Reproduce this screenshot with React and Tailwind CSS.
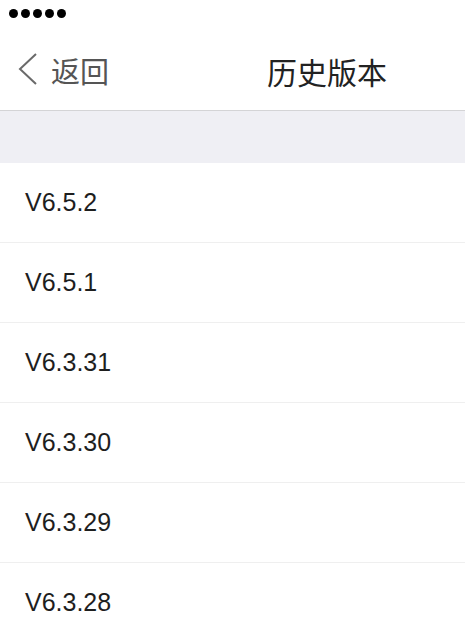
import React from 'react';

const versions = ['V6.5.2', 'V6.5.1', 'V6.3.31', 'V6.3.30', 'V6.3.29', 'V6.3.28'];

function StatusBar() {
  return (
    <div className="h-[28px] pl-[9px] pt-[9px] flex gap-[3px]">
      {[0, 1, 2, 3, 4].map((i) => (
        <span key={i} className="block w-[9px] h-[9px] rounded-full bg-black" />
      ))}
    </div>
  );
}

function NavBar() {
  return (
    <div className="h-[83px] flex items-center border-b border-[#d4d4d6] bg-white">
      <div className="flex items-center pl-[18px]">
        <svg width="20" height="32" viewBox="0 0 20 32" fill="none">
          <polyline points="18,1 2,16 18,31" stroke="#6a6a6a" strokeWidth="2" />
        </svg>
        <span className="ml-[13px] mt-[2px] text-[29px] leading-none text-[#555555] font-['Noto_Sans_CJK_SC',sans-serif]">
          返回
        </span>
      </div>
      <span className="ml-[158px] mt-[3px] text-[30px] leading-none text-[#222222] font-['Noto_Sans_CJK_SC',sans-serif]">
        历史版本
      </span>
    </div>
  );
}

export default function App() {
  return (
    <div className="w-[465px] h-[636px] overflow-hidden bg-white font-['Liberation_Sans',Arial,sans-serif]">
      <StatusBar />
      <NavBar />
      {/* 灰色间隔 */}
      <div className="h-[52px] bg-[#efeff4]" />
      <div>
        {versions.map((v) => (
          <div key={v} className="h-[80px] flex items-center pl-[25px] border-b border-[#efefef]">
            <span className="text-[25px] text-[#1e1e1e]">{v}</span>
          </div>
        ))}
      </div>
    </div>
  );
}
